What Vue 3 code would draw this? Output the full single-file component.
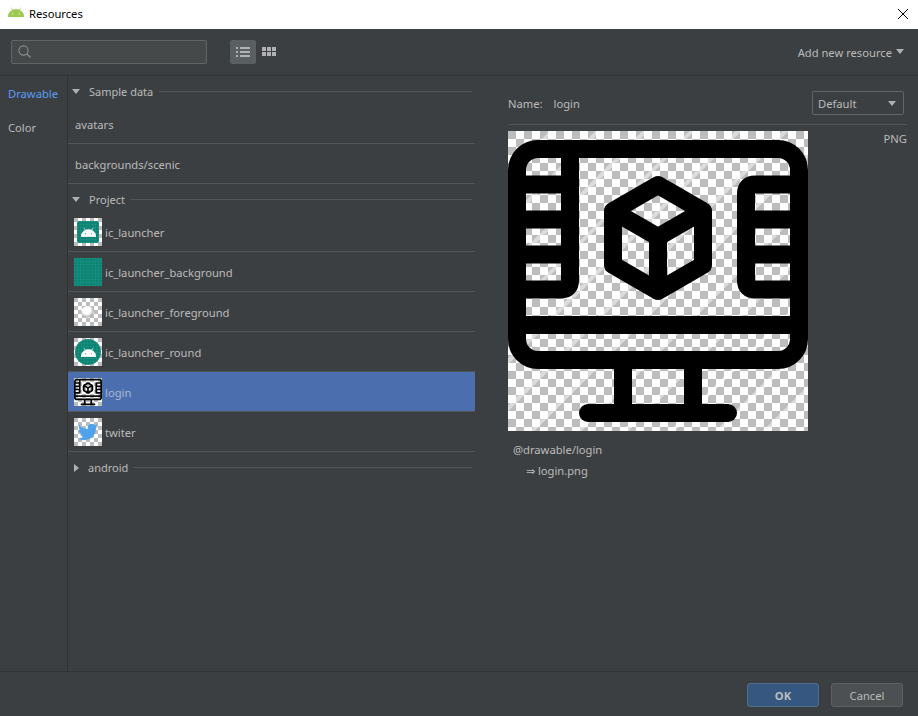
<template>
  <div class="dialog">
    <!-- 共用图标 -->
    <svg class="defs" width="0" height="0">
      <defs>
        <symbol id="monitor" viewBox="0 0 300 300">
          <g fill="none" stroke="#000" stroke-width="18" stroke-linejoin="round" stroke-linecap="butt">
            <rect x="9" y="18" width="282" height="211" rx="21" />
            <path d="M9 158.5H53Q62 158.5 62 149.5V18" />
            <path d="M291 53.5H247Q238 53.5 238 62.5V149.5Q238 158.5 247 158.5H291" />
            <path d="M9 53.5H62M9 88.5H62M9 123.5H62M238 88.5H291M238 123.5H291" />
            <path d="M9 194H291" />
            <path d="M115 229V282M185 229V282" />
            <path d="M80 282H220" stroke-linecap="round" />
            <path d="M150 54L195 80V134L150 160L105 134V80ZM105 80L150 106L195 80M150 106V160" />
          </g>
        </symbol>
        <symbol id="droid" viewBox="0 0 16 10">
          <path d="M0 10a8 7.6 0 0 1 16 0ZM3 .6l2 3M13 .6l-2 3" fill="currentColor" stroke="currentColor" stroke-width=".7" />
          <circle cx="4.8" cy="6.8" r=".6" fill="var(--eye)" />
          <circle cx="11.2" cy="6.8" r=".6" fill="var(--eye)" />
        </symbol>
      </defs>
    </svg>

    <header class="titlebar">
      <svg class="app-logo"><use href="#droid" /></svg>
      <span class="title">Resources</span>
      <svg class="close" viewBox="0 0 10 10"><path d="M0 0L10 10M10 0L0 10" stroke="#000" stroke-width="1" /></svg>
    </header>

    <div class="toolbar">
      <div class="search">
        <svg viewBox="0 0 13 13" width="13" height="13">
          <circle cx="5.5" cy="5.5" r="4.6" fill="none" stroke="#8a8d8e" stroke-width="1.1" />
          <path d="M9 9L12.5 12.5" stroke="#8a8d8e" stroke-width="1.3" />
        </svg>
      </div>
      <button class="view-btn active">
        <svg viewBox="0 0 14 10" width="14" height="10">
          <path d="M0 0h2v2H0zM0 4h2v2H0zM0 8h2v2H0zM4 0h10v2H4zM4 4h10v2H4zM4 8h10v2H4z" fill="#afb1b3" />
        </svg>
      </button>
      <button class="view-btn">
        <svg viewBox="0 0 14 9" width="14" height="9">
          <path d="M0 0h4v4H0zM5 0h4v4H5zM10 0h4v4h-4zM0 5h4v4H0zM5 5h4v4H5zM10 5h4v4h-4z" fill="#afb1b3" />
        </svg>
      </button>
      <div class="add-res"><span>Add new resource</span><i class="caret"></i></div>
    </div>

    <div class="main">
      <nav class="nav">
        <div class="nav-item on">Drawable</div>
        <div class="nav-item">Color</div>
      </nav>

      <section class="list">
        <div class="group"><i class="tri"></i><span>Sample data</span><b></b></div>
        <div class="row plain"><span>avatars</span></div>
        <div class="row plain"><span>backgrounds/scenic</span></div>

        <div class="group"><i class="tri"></i><span>Project</span><b></b></div>
        <div v-for="r in rows" :key="r.name" class="row" :class="{ selected: r.name === 'login' }">
          <div class="thumb" :class="r.thumb">
            <svg v-if="r.thumb === 'launcher' || r.thumb === 'round'" class="droid"><use href="#droid" /></svg>
            <svg v-if="r.thumb === 'monitor'" viewBox="0 0 28 28" width="28" height="28"><use href="#monitor" width="28" height="28" /></svg>
            <svg v-if="r.thumb === 'bird'" viewBox="0 0 24 24" width="20" height="20">
              <path fill="#4fa3ec" d="M23.953 4.57a10 10 0 01-2.825.775 4.958 4.958 0 002.163-2.723c-.951.555-2.005.959-3.127 1.184a4.92 4.92 0 00-8.384 4.482C7.69 8.095 4.067 6.13 1.64 3.162a4.822 4.822 0 00-.666 2.475c0 1.71.87 3.213 2.188 4.096a4.904 4.904 0 01-2.228-.616v.06a4.923 4.923 0 003.946 4.827 4.996 4.996 0 01-2.212.085 4.936 4.936 0 004.604 3.417 9.867 9.867 0 01-6.102 2.105c-.39 0-.779-.023-1.17-.067a13.995 13.995 0 007.557 2.209c9.053 0 13.998-7.496 13.998-13.985 0-.21 0-.42-.015-.63A9.935 9.935 0 0024 4.59z" />
            </svg>
            <i v-if="r.thumb === 'fore'" class="blob"></i>
          </div>
          <span>{{ r.name }}</span>
        </div>

        <div class="group closed"><i class="tri right"></i><span>android</span><b></b></div>
      </section>

      <section class="detail">
        <div class="name-row">
          <span class="name-label">Name:</span>
          <span>login</span>
          <div class="select">Default<i class="caret"></i></div>
        </div>
        <div class="preview-row">
          <div class="preview">
            <svg viewBox="0 0 300 300" width="300" height="300"><use href="#monitor" width="300" height="300" /></svg>
          </div>
          <span>PNG</span>
        </div>
        <div class="path">@drawable/login</div>
        <div class="path sub">⇒ login.png</div>
      </section>
    </div>

    <footer class="footer">
      <button class="btn primary">OK</button>
      <button class="btn">Cancel</button>
    </footer>
  </div>
</template>

<script setup>
const rows = [
  { name: 'ic_launcher', thumb: 'launcher' },
  { name: 'ic_launcher_background', thumb: 'back' },
  { name: 'ic_launcher_foreground', thumb: 'fore' },
  { name: 'ic_launcher_round', thumb: 'round' },
  { name: 'login', thumb: 'monitor' },
  { name: 'twiter', thumb: 'bird' }
]
</script>

<style>
html, body {
  margin: 0;
  background: #3c3f41;
}
</style>

<style scoped>
.dialog {
  width: 918px;
  height: 716px;
  display: flex;
  flex-direction: column;
  background: #3c3f41;
  color: #bbbbbb;
  font: 11.2px "Noto Sans", "Open Sans", sans-serif;
  overflow: hidden;
}

.defs {
  position: absolute;
}

.titlebar {
  height: 29px;
  flex: none;
  display: flex;
  align-items: center;
  background: #fff;
  color: #000;
  padding: 0 10px 2px 8px;
  box-sizing: border-box;
}

.app-logo {
  width: 16px;
  height: 10px;
  color: #9cc94f;
  --eye: #fff;
  margin-right: 5px;
  margin-top: -3px;
}

.close {
  width: 10px;
  height: 10px;
  margin-left: auto;
}

.toolbar {
  height: 47px;
  flex: none;
  box-sizing: border-box;
  display: flex;
  align-items: center;
  padding: 0 14px 1px 11px;
  border-bottom: 1px solid #323232;
}

.search {
  width: 196px;
  height: 24px;
  box-sizing: border-box;
  display: flex;
  align-items: center;
  padding-left: 6px;
  background: #45494a;
  border: 1px solid #646464;
  border-radius: 2px;
  margin-right: 23px;
}

.view-btn {
  width: 26px;
  height: 24px;
  padding: 0;
  border: 0;
  border-radius: 2px;
  background: none;
  display: flex;
  align-items: center;
  justify-content: center;
}

.view-btn.active {
  background: #5a5f62;
}

.add-res {
  margin-left: auto;
  display: flex;
  align-items: center;
  gap: 4px;
}

.add-res span {
  padding-top: 2px;
}

.caret {
  width: 0;
  height: 0;
  border-left: 4.5px solid transparent;
  border-right: 4.5px solid transparent;
  border-top: 5px solid #afb1b3;
}

.main {
  flex: 1;
  display: flex;
  min-height: 0;
}

.nav {
  width: 68px;
  flex: none;
  box-sizing: border-box;
  border-right: 1px solid #323232;
}

.nav-item {
  height: 34px;
  line-height: 36px;
  padding-left: 8px;
}

.nav-item.on {
  color: #589df6;
}

.list {
  width: 407px;
  flex: none;
}

.group {
  height: 28px;
  padding: 3px 3px 0 4px;
  box-sizing: border-box;
  display: flex;
  align-items: center;
  font-size: 11px;
}

.group span {
  margin: 0 6px 0 9px;
}

.group b {
  flex: 1;
  height: 1px;
  background: #515658;
}

.tri {
  width: 0;
  height: 0;
  border-left: 4px solid transparent;
  border-right: 4px solid transparent;
  border-top: 5px solid #afb1b3;
}

.tri.right {
  margin-left: 2px;
  border-top: 4px solid transparent;
  border-bottom: 4px solid transparent;
  border-left: 5px solid #afb1b3;
  border-right: 0;
}

.row {
  height: 40px;
  box-sizing: border-box;
  display: flex;
  align-items: center;
  padding-left: 6px;
  gap: 3px;
  border-bottom: 1px solid #515658;
}

.row span {
  padding-top: 2px;
}

.row.plain {
  padding-left: 7px;
}

.row.selected {
  background: #4b6eaf;
  color: #a9b7d6;
}

.thumb {
  position: relative;
  width: 28px;
  height: 28px;
  flex: none;
  display: flex;
  align-items: center;
  justify-content: center;
  overflow: hidden;
  background: repeating-conic-gradient(#fff 0 25%, #bdbdbd 0 50%) 0 0 / 8px 8px;
}

.thumb.launcher::before,
.thumb.back::before,
.thumb.round::before {
  content: "";
  position: absolute;
  background-color: #0a8473;
  background-image:
    repeating-linear-gradient(0deg, rgba(255, 255, 255, 0.05) 0 1px, transparent 1px 3px),
    repeating-linear-gradient(90deg, rgba(255, 255, 255, 0.05) 0 1px, transparent 1px 3px);
}

.thumb.launcher::before {
  inset: 3px;
  border-radius: 2px;
}

.thumb.back::before {
  inset: 0;
}

.thumb.round::before {
  inset: 1px;
  border-radius: 50%;
}

.droid {
  position: relative;
  width: 15px;
  height: 10px;
  color: #fff;
  --eye: #0a8473;
}

.blob {
  width: 14px;
  height: 12px;
  border-radius: 50%;
  background: radial-gradient(circle at 40% 35%, #fff 0 35%, rgba(170, 170, 170, 0.8) 60%, rgba(255, 255, 255, 0) 72%);
}

.detail {
  flex: 1;
  box-sizing: border-box;
  padding: 15px 11px 0 33px;
}

.name-row {
  height: 34px;
  box-sizing: border-box;
  padding-bottom: 9px;
  display: flex;
  align-items: center;
  border-bottom: 1px solid #515658;
}

.name-label {
  margin-right: 11px;
}

.select {
  width: 92px;
  height: 24px;
  box-sizing: border-box;
  margin-left: auto;
  margin-right: 3px;
  padding: 0 7px 0 5px;
  display: flex;
  align-items: center;
  justify-content: space-between;
  border: 1px solid #646464;
  border-radius: 2px;
}

.preview-row {
  display: flex;
  justify-content: space-between;
  margin-top: 6px;
}

.preview-row span {
  line-height: 16px;
}

.preview {
  width: 300px;
  height: 300px;
  background:
    repeating-linear-gradient(135deg, transparent 0 29px, rgba(255, 255, 255, 0.45) 29px 33px),
    repeating-conic-gradient(#fff 0 25%, #bdbdbd 0 50%) 0 0 / 16px 16px;
}

.preview svg {
  display: block;
}

.path {
  margin: 9px 0 0 5px;
  line-height: 20px;
}

.path.sub {
  margin: 1px 0 0 18px;
}

.footer {
  height: 45px;
  flex: none;
  box-sizing: border-box;
  border-top: 1px solid #323232;
  padding: 11px 15px 0 0;
  display: flex;
  justify-content: flex-end;
  gap: 12px;
}

.btn {
  width: 72px;
  height: 24px;
  padding: 0;
  font: inherit;
  color: #bbbbbb;
  background: #4c5052;
  border: 1px solid #5e6060;
  border-radius: 3px;
}

.btn.primary {
  background: #365880;
  border-color: #4c708c;
  font-weight: 700;
}
</style>
